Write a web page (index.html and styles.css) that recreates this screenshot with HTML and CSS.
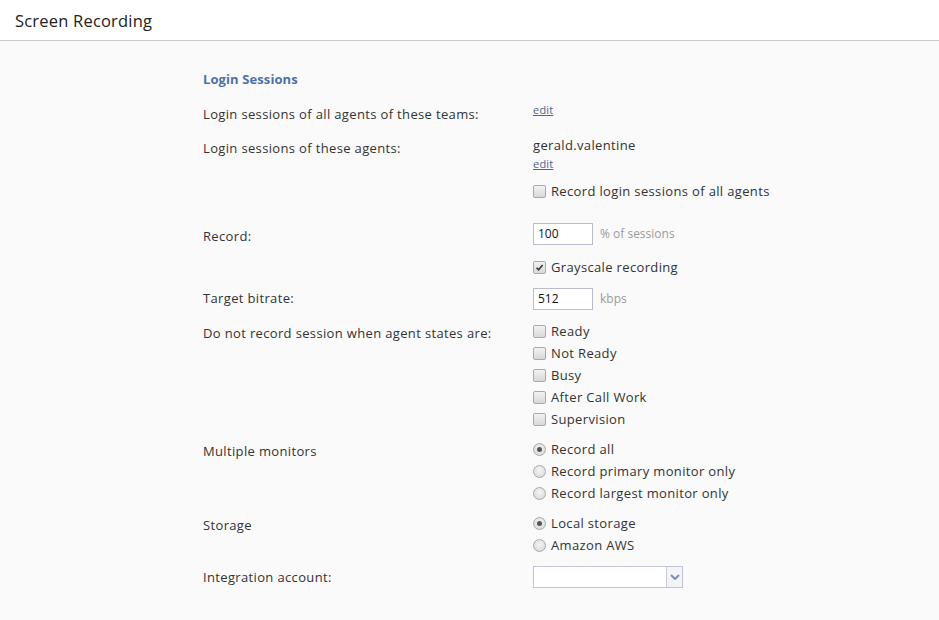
FILE: index.html
```html
<!DOCTYPE html>
<html>
<head>
<meta charset="utf-8">
<link rel="stylesheet" href="styles.css">
</head>
<body>
<header class="topbar"><h1 class="title">Screen Recording</h1></header>
<main class="content">
  <h2 class="section">Login Sessions</h2>

  <div class="row r-teams">
    <div class="label">Login sessions of all agents of these teams:</div>
    <div class="value"><a class="edit" href="#">edit</a></div>
  </div>

  <div class="row r-agents">
    <div class="label">Login sessions of these agents:</div>
    <div class="value">
      <div class="agent">gerald.valentine</div>
      <a class="edit edit2" href="#">edit</a>
      <label class="opt opt-gap"><span class="cb"></span>Record login sessions of all agents</label>
    </div>
  </div>

  <div class="row r-record">
    <div class="label lab-input">Record:</div>
    <div class="value">
      <div class="inline"><span class="field">100</span><span class="unit">% of sessions</span></div>
      <label class="opt opt-gray"><span class="cb checked"><svg viewBox="0 0 13 13" width="13" height="13"><path d="M3 6.8 L5.4 9.2 L10.2 3.6" fill="none" stroke="#3a3a3a" stroke-width="2"/></svg></span>Grayscale recording</label>
    </div>
  </div>

  <div class="row r-bitrate">
    <div class="label lab-field">Target bitrate:</div>
    <div class="value">
      <div class="inline"><span class="field">512</span><span class="unit">kbps</span></div>
    </div>
  </div>

  <div class="row r-states">
    <div class="label lab-opt">Do not record session when agent states are:</div>
    <div class="value">
      <label class="opt"><span class="cb"></span>Ready</label>
      <label class="opt"><span class="cb"></span>Not Ready</label>
      <label class="opt"><span class="cb"></span>Busy</label>
      <label class="opt"><span class="cb"></span>After Call Work</label>
      <label class="opt"><span class="cb"></span>Supervision</label>
    </div>
  </div>

  <div class="row r-monitors">
    <div class="label lab-opt">Multiple monitors</div>
    <div class="value">
      <label class="opt"><span class="rb on"></span>Record all</label>
      <label class="opt"><span class="rb"></span>Record primary monitor only</label>
      <label class="opt"><span class="rb"></span>Record largest monitor only</label>
    </div>
  </div>

  <div class="row r-storage">
    <div class="label lab-opt">Storage</div>
    <div class="value">
      <label class="opt"><span class="rb on"></span>Local storage</label>
      <label class="opt"><span class="rb"></span>Amazon AWS</label>
    </div>
  </div>

  <div class="row r-account">
    <div class="label lab-field">Integration account:</div>
    <div class="value">
      <div class="select"><span class="sel-text"></span><span class="sel-arrow"><svg viewBox="0 0 10 6" width="10" height="6"><path d="M1 1 L5 5 L9 1" fill="none" stroke="#7d8fb5" stroke-width="2"/></svg></span></div>
    </div>
  </div>
</main>
</body>
</html>
```

FILE: styles.css
```css
html, body {
  margin: 0;
  padding: 0;
  background: #fafafa;
  height: 100%;
}
body {
  font-family: "Open Sans", "Noto Sans", sans-serif;
  font-size: 13px;
  letter-spacing: 0.35px;
  color: #333;
}
.topbar {
  background: #fff;
  height: 41px;
  border-bottom: 1px solid #c9c9c9;
  box-sizing: border-box;
  display: flex;
  align-items: center;
  padding-left: 15px;
}
.title {
  margin: 0;
  font-size: 16.5px;
  font-weight: 400;
  letter-spacing: 0.2px;
  color: #222;
}
.content {
  padding-left: 203px;
  padding-top: 29px;
}
.section {
  margin: 0;
  font-size: 13px;
  font-weight: 700;
  letter-spacing: 0.1px;
  color: #4f70aa;
  line-height: 18px;
}
.row {
  display: grid;
  grid-template-columns: 330px 1fr;
}
.label {
  line-height: 18px;
  padding-top: 3px;
}
.lab-input { padding-top: 5px; }
.lab-field { padding-top: 2px; }
.lab-opt { padding-top: 4px; }
.value {
  display: flex;
  flex-direction: column;
  align-items: flex-start;
}
.r-teams { margin-top: 14px; }
.r-agents { margin-top: 13px; }
.r-record { margin-top: 20px; }
.r-bitrate { margin-top: 9px; }
.r-states { margin-top: 10px; }
.r-monitors { margin-top: 8px; }
.r-storage { margin-top: 8px; }
.r-account { margin-top: 10px; }

.edit {
  font-size: 11px;
  line-height: 16px;
  letter-spacing: 0.2px;
  color: #4b6392;
  text-decoration: underline;
}
.edit2 { margin-top: 2px; }
.agent { line-height: 18px; color: #333; }
.opt {
  display: flex;
  align-items: center;
  line-height: 22px;
  height: 22px;
  color: #333;
}
.opt-gap { margin-top: 8px; }
.opt-gray { margin-top: 11px; }
.cb {
  width: 11px;
  height: 11px;
  border: 1px solid #a9a9a9;
  border-radius: 2px;
  background: linear-gradient(#f2f2f2, #d8d8d8);
  margin-right: 5px;
  display: inline-flex;
  align-items: center;
  justify-content: center;
  overflow: hidden;
  flex: none;
}
.cb svg { display: block; }
.rb {
  width: 11px;
  height: 11px;
  border: 1px solid #a9a9a9;
  border-radius: 50%;
  background: radial-gradient(circle at 50% 40%, #f5f5f5, #d4d4d4);
  margin-right: 5px;
  display: inline-flex;
  align-items: center;
  justify-content: center;
  flex: none;
}
.rb.on::after {
  content: "";
  width: 5px;
  height: 5px;
  border-radius: 50%;
  background: #555;
}
.inline {
  display: flex;
  align-items: center;
}
.field {
  width: 60px;
  height: 22px;
  box-sizing: border-box;
  border: 1px solid #b9bccc;
  background: #fff;
  font-size: 12px;
  line-height: 20px;
  padding-left: 4px;
  color: #111;
  margin-top: 1px;
  letter-spacing: 0;
}
.unit {
  margin-left: 7px;
  font-size: 12px;
  color: #9a9a9a;
  letter-spacing: 0;
}
.select {
  width: 150px;
  height: 22px;
  box-sizing: border-box;
  border: 1px solid #c0c4d4;
  background: #fff;
  display: flex;
}
.sel-text { flex: 1; }
.sel-arrow {
  width: 15px;
  border-left: 1px solid #c8ccd8;
  background: #f3f4f7;
  display: flex;
  align-items: center;
  justify-content: center;
}
.sel-arrow svg { display: block; }
```
